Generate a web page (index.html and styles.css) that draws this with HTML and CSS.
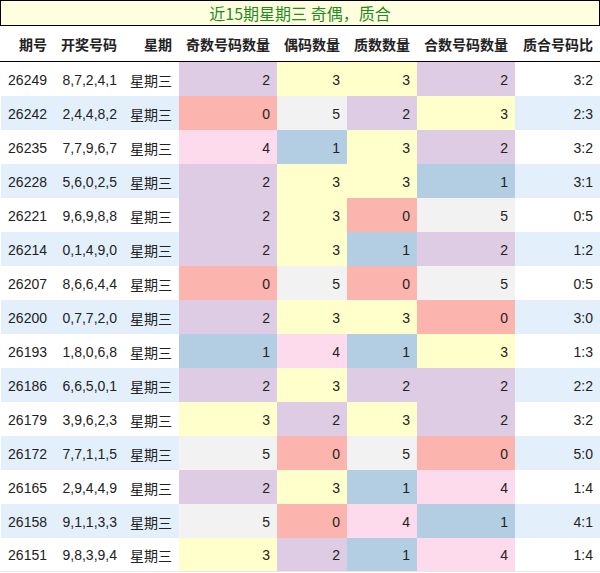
FILE: index.html
```html
<!DOCTYPE html>
<html lang="zh">
<head>
<meta charset="utf-8">
<link rel="stylesheet" href="styles.css">
</head>
<body>
<div class="title">近15期星期三 奇偶，质合</div>
<table class="tbl">
<colgroup>
<col class="c1"><col class="c2"><col class="c3"><col class="c4"><col class="c5"><col class="c6"><col class="c7"><col class="c8">
</colgroup>
<thead>
<tr><th>期号</th><th>开奖号码</th><th>星期</th><th>奇数号码数量</th><th>偶码数量</th><th>质数数量</th><th>合数号码数量</th><th>质合号码比</th></tr>
</thead>
<tbody>
<tr><td>26249</td><td>8,7,2,4,1</td><td>星期三</td><td class="v2">2</td><td class="v3">3</td><td class="v3">3</td><td class="v2">2</td><td>3:2</td></tr>
<tr><td>26242</td><td>2,4,4,8,2</td><td>星期三</td><td class="v0">0</td><td class="v5">5</td><td class="v2">2</td><td class="v3">3</td><td>2:3</td></tr>
<tr><td>26235</td><td>7,7,9,6,7</td><td>星期三</td><td class="v4">4</td><td class="v1">1</td><td class="v3">3</td><td class="v2">2</td><td>3:2</td></tr>
<tr><td>26228</td><td>5,6,0,2,5</td><td>星期三</td><td class="v2">2</td><td class="v3">3</td><td class="v3">3</td><td class="v1">1</td><td>3:1</td></tr>
<tr><td>26221</td><td>9,6,9,8,8</td><td>星期三</td><td class="v2">2</td><td class="v3">3</td><td class="v0">0</td><td class="v5">5</td><td>0:5</td></tr>
<tr><td>26214</td><td>0,1,4,9,0</td><td>星期三</td><td class="v2">2</td><td class="v3">3</td><td class="v1">1</td><td class="v2">2</td><td>1:2</td></tr>
<tr><td>26207</td><td>8,6,6,4,4</td><td>星期三</td><td class="v0">0</td><td class="v5">5</td><td class="v0">0</td><td class="v5">5</td><td>0:5</td></tr>
<tr><td>26200</td><td>0,7,7,2,0</td><td>星期三</td><td class="v2">2</td><td class="v3">3</td><td class="v3">3</td><td class="v0">0</td><td>3:0</td></tr>
<tr><td>26193</td><td>1,8,0,6,8</td><td>星期三</td><td class="v1">1</td><td class="v4">4</td><td class="v1">1</td><td class="v3">3</td><td>1:3</td></tr>
<tr><td>26186</td><td>6,6,5,0,1</td><td>星期三</td><td class="v2">2</td><td class="v3">3</td><td class="v2">2</td><td class="v2">2</td><td>2:2</td></tr>
<tr><td>26179</td><td>3,9,6,2,3</td><td>星期三</td><td class="v3">3</td><td class="v2">2</td><td class="v3">3</td><td class="v2">2</td><td>3:2</td></tr>
<tr><td>26172</td><td>7,7,1,1,5</td><td>星期三</td><td class="v5">5</td><td class="v0">0</td><td class="v5">5</td><td class="v0">0</td><td>5:0</td></tr>
<tr><td>26165</td><td>2,9,4,4,9</td><td>星期三</td><td class="v2">2</td><td class="v3">3</td><td class="v1">1</td><td class="v4">4</td><td>1:4</td></tr>
<tr><td>26158</td><td>9,1,1,3,3</td><td>星期三</td><td class="v5">5</td><td class="v0">0</td><td class="v4">4</td><td class="v1">1</td><td>4:1</td></tr>
<tr><td>26151</td><td>9,8,3,9,4</td><td>星期三</td><td class="v3">3</td><td class="v2">2</td><td class="v1">1</td><td class="v4">4</td><td>1:4</td></tr>
</tbody>
</table>
</body>
</html>
```
FILE: styles.css
```css
html, body {
  margin: 0;
  padding: 0;
  background: #fff;
}
body {
  width: 600px;
  font-family: "Liberation Sans", "Noto Sans CJK SC", sans-serif;
  color: #222;
}
.title {
  box-sizing: border-box;
  height: 26px;
  border: 1px solid #000;
  background: #ffffdf;
  color: #1e8c1e;
  font-family: "Noto Sans CJK SC", sans-serif;
  font-size: 16px;
  line-height: 24px;
  text-align: center;
}
.tbl {
  width: 600px;
  table-layout: fixed;
  border-collapse: separate;
  border-spacing: 0;
  font-size: 14px;
}
.c1 { width: 54px; }
.c2 { width: 70px; }
.c3 { width: 55px; }
.c4 { width: 98px; }
.c5 { width: 70px; }
.c6 { width: 70px; }
.c7 { width: 98px; }
.c8 { width: 85px; }
.tbl th, .tbl td {
  padding: 0 7px 0 0;
  text-align: right;
  white-space: nowrap;
  overflow: hidden;
}
.tbl thead tr { height: 36px; }
.tbl th {
  font-family: "Noto Sans CJK SC", sans-serif;
  font-weight: bold;
  font-size: 14px;
  color: #222;
  border-bottom: 1px solid #000;
  padding-top: 1px;
}
.tbl tbody tr { height: 34px; }
.tbl tbody tr:nth-child(even) td { background: #e3f0fb; }
.tbl tbody tr:last-child td { border-bottom: 1px solid #e8e8e8; }
.tbl tbody td:first-child { border-left: 1px solid #fff; }
.tbl tbody td { padding-top: 1px; }
.tbl tbody tr td.v0 { background: #fbb4ae; }
.tbl tbody tr td.v1 { background: #b3cde3; }
.tbl tbody tr td.v2 { background: #decbe4; }
.tbl tbody tr td.v3 { background: #ffffcc; }
.tbl tbody tr td.v4 { background: #fddaec; }
.tbl tbody tr td.v5 { background: #f2f2f2; }
```
